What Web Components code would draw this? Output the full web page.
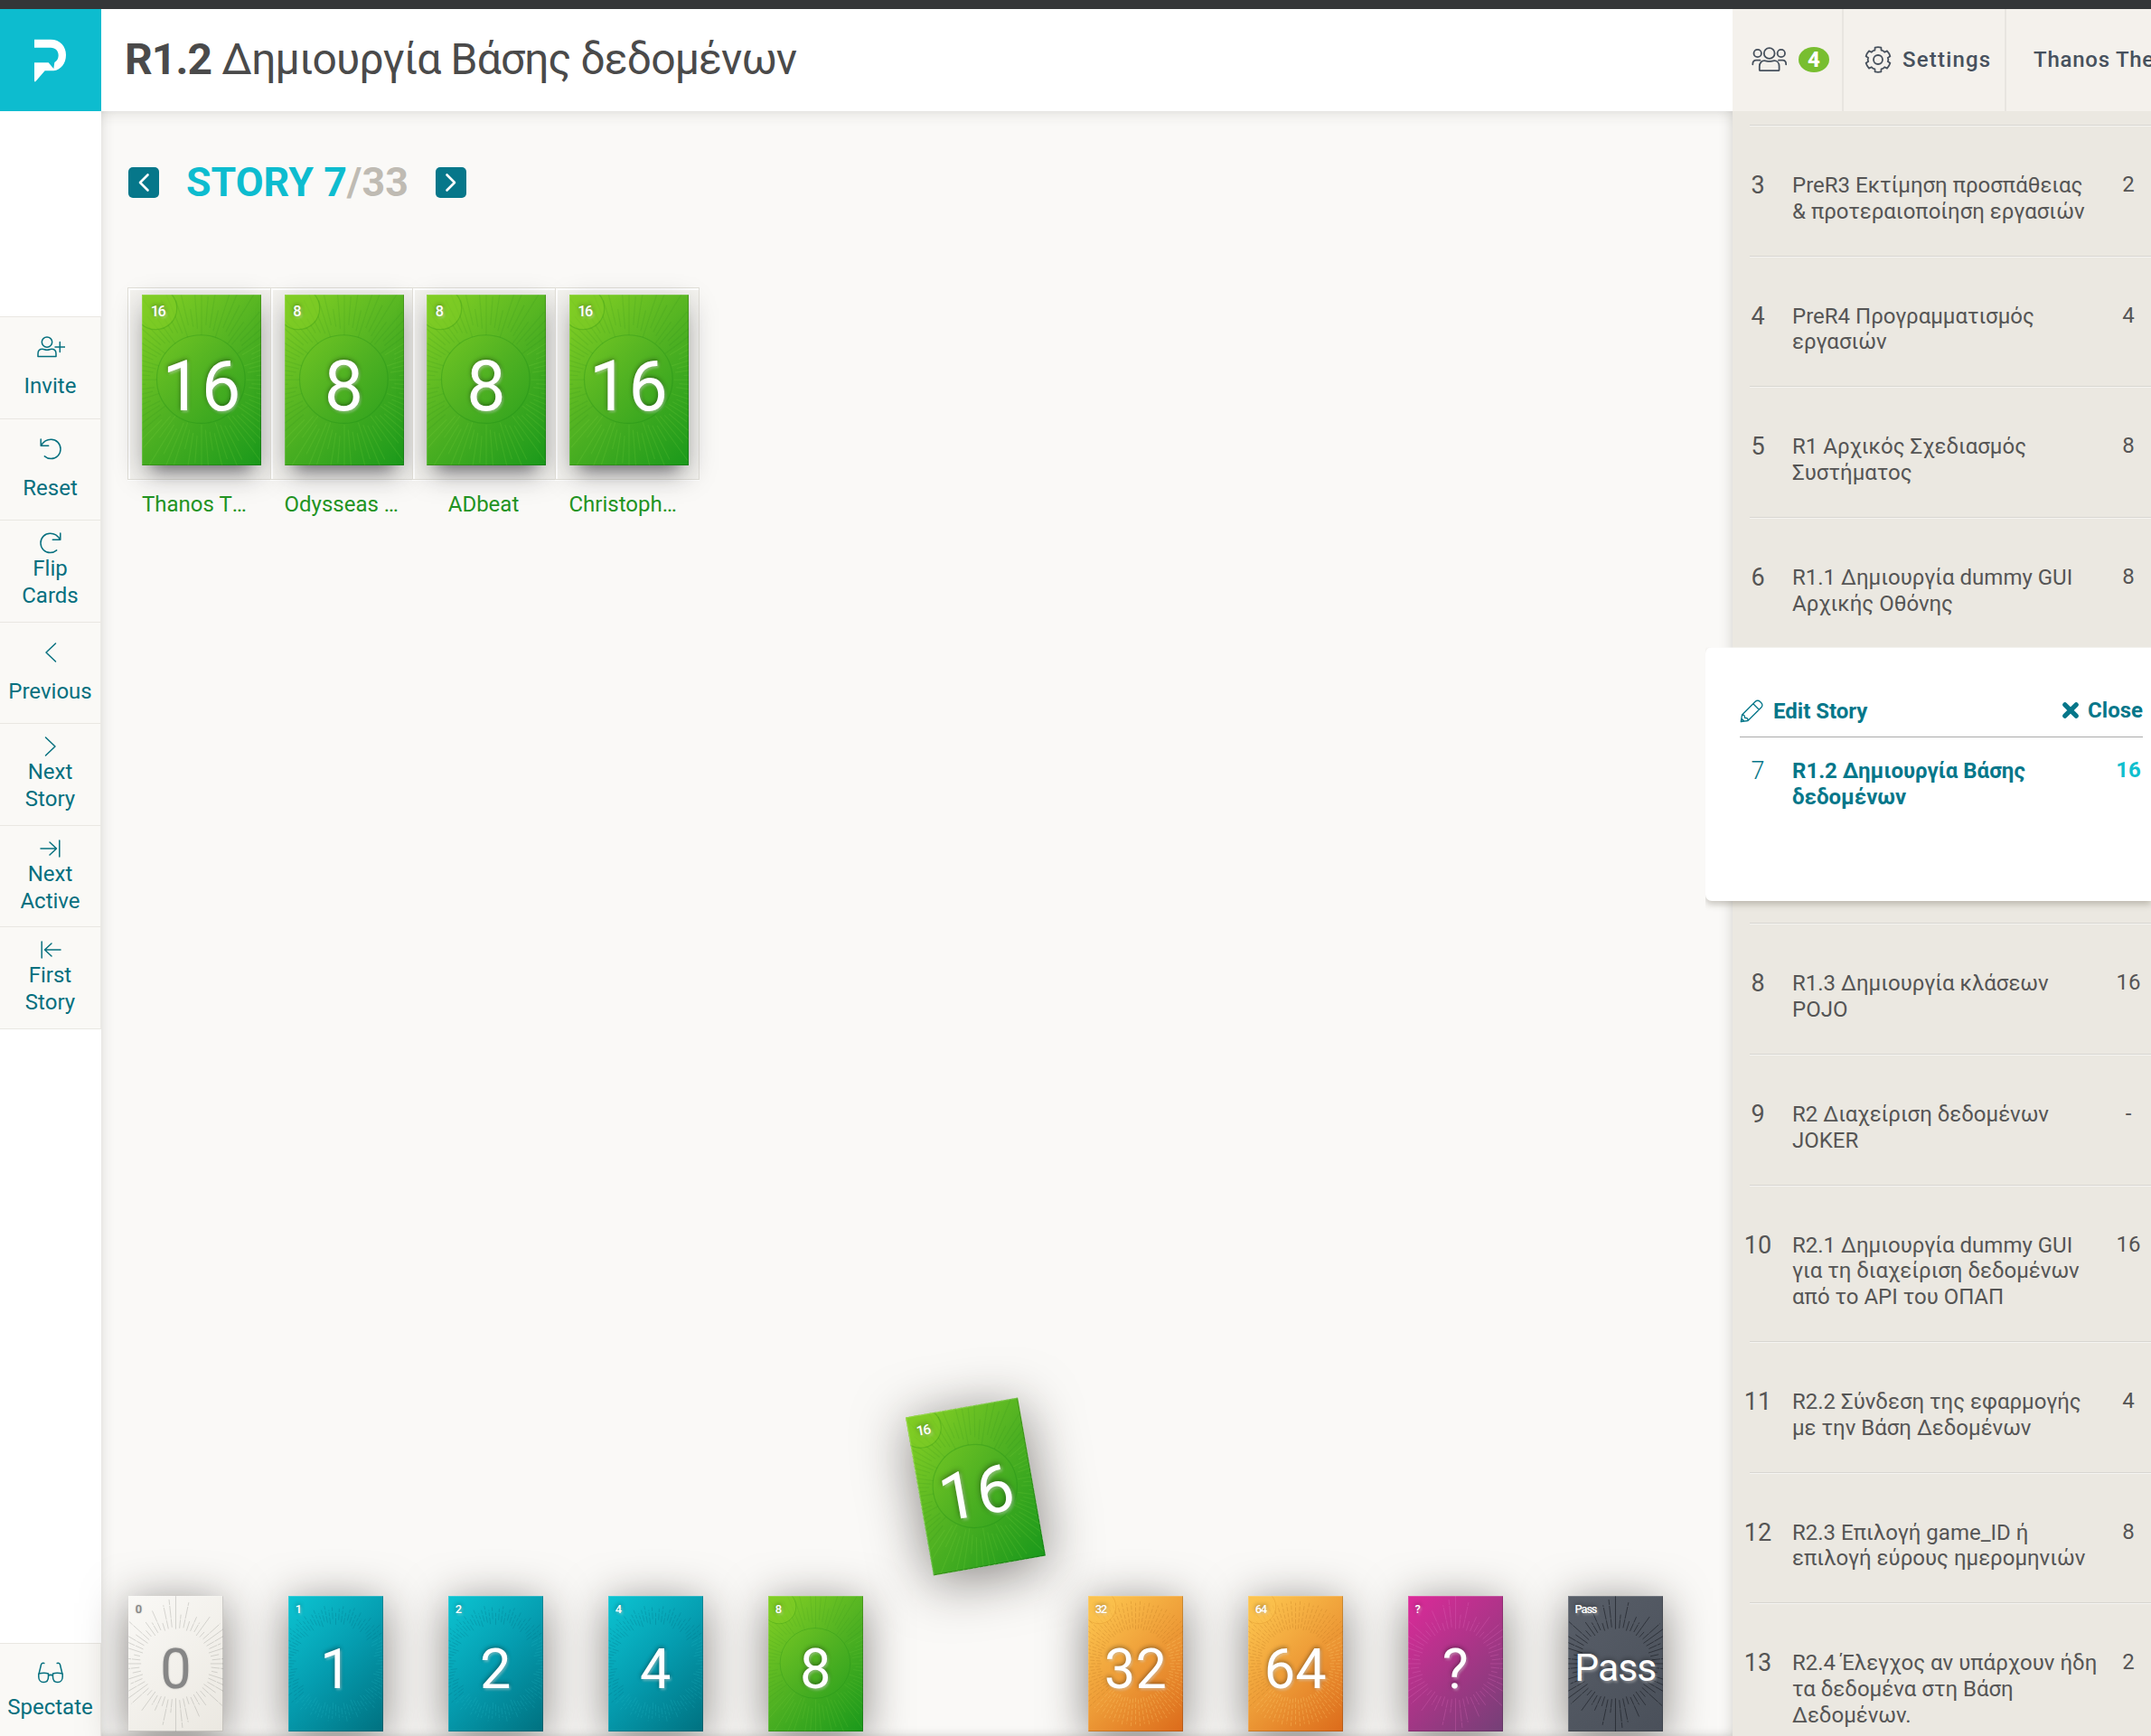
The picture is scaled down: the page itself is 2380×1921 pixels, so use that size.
<!DOCTYPE html>
<html lang="el">
<head>
<meta charset="utf-8">
<title>Planning poker</title>
<style>
html,body{margin:0;height:100%;overflow:hidden;background:#faf9f7}
body{font-family:Roboto,"Noto Sans",sans-serif;color:#4a4a4a}
</style>
</head>
<body>
<pp-app></pp-app>
<script>
const define = (name, html, setup) => customElements.define(name, class extends HTMLElement {
  connectedCallback() {
    if (this.shadowRoot) return;
    const t = document.createElement('template');
    t.innerHTML = typeof html === 'function' ? html(this) : html;
    this.attachShadow({mode: 'open'}).append(t.content.cloneNode(true));
    if (setup) setup(this);
  }
});

/* Outline of a six-toothed gear centred on (15,15) */
function gearPath() {
  const p = (deg, r) => {
    const a = deg * Math.PI / 180;
    return (15 + Math.cos(a) * r).toFixed(2) + ' ' + (15 + Math.sin(a) * r).toFixed(2);
  };
  let d = '';
  for (let k = 0; k < 6; k++) {
    const c = -90 + 60 * k;
    d += `${k ? 'L' : 'M'}${p(c - 19, 11)}L${p(c - 14, 13.9)}A14 14 0 0 1 ${p(c + 14, 13.9)}L${p(c + 19, 11)}Q${p(c + 30, 11.8)} ${p(c + 41, 11)}`;
  }
  return d + 'Z';
}

/* Line icons, each drawn at its natural pixel size */
const ICONS = {
  invite: [32, 24, '<ellipse cx="12" cy="6.6" rx="5.7" ry="5.6"/><path d="M2 22.4V19.500c0-3.600 2.400-5.200 5-5.200 1.600 0 2.800.9 5 .9s3.400-.9 5-.9c2.600 0 5 1.600 5 5.200v2.900zM26.300 6.500v11M21 12h10.600"/>'],
  reset: [26, 24, '<path d="M2.200 1v7.300h8.500M2.600 8.100C5 3.800 9 1.300 13.500 1.300c6 0 10.500 4.700 10.500 10.600s-4.600 10.700-10.500 10.700c-2.700 0-5.200-1-7.200-2.700"/>'],
  flip: [26, 24, '<path d="M23.800 1v7.300h-8.500M23.400 8.100C21 3.800 17 1.300 12.500 1.300 6.500 1.300 2 6 2 11.900s4.600 10.700 10.500 10.700c2.700 0 5.200-1 7.200-2.700"/>'],
  prev: [16, 24, '<path d="M13.500 2 3 12l10.500 10"/>'],
  next: [16, 24, '<path d="M2.500 2 13 12 2.500 22"/>'],
  last: [26, 24, '<path d="M2 12h17.500M12 5l7.500 7-7.500 7M22.800 3v18"/>'],
  first: [26, 24, '<path d="M24 12H6.500M14 5 6.500 12l7.500 7M3.200 3v18"/>'],
  glasses: [30, 24, '<path d="M7.800 1.500C5.500.8 4.600 2 4.300 4L2 13.500M22.200 1.500c2.300-.7 3.200.5 3.500 2.500L28 13.500M1.800 13c4-1 8-1 10.700 0v3.500c0 3.500-2 6-5.300 6s-5.400-2.500-5.400-6zM28.200 13c-4-1-8-1-10.700 0v3.500c0 3.500 2 6 5.300 6s5.400-2.500 5.400-6zM12.500 15.200c1.500-1 3.500-1 5 0"/>'],
  users: [40, 28, '<circle cx="19.700" cy="7" r="5.900"/><circle cx="6.700" cy="7" r="4.200"/><circle cx="32.800" cy="7" r="4.200"/><path d="M9.800 26.200c-.6 0-1-.4-1-1V21.500c0-4 2.400-6.300 5.400-6.300 2 0 3 .7 5.500.7s3.500-.7 5.500-.7c3 0 5.400 2.300 5.400 6.300v3.700c0 .6-.4 1-1 1zM1.300 19.300c0-3 1.500-4.600 3.800-4.600h4.400M38.200 19.300c0-3-1.500-4.600-3.800-4.600h-4.400"/>'],
  gear: [30, 30, `<path d="${gearPath()}"/><circle cx="15" cy="15" r="5"/>`],
  pencil: [26, 26, '<path d="M1.300 24.700 2.500 17 17 2.500c1.800-1.800 4-1.600 5.500-.1l1.300 1.300c1.500 1.500 1.500 3.700-.2 5.400L9 23.500zM2.500 17c2-.2 3 .6 3 3.200 2.700 0 3.700 1.200 3.500 3.300M14.800 4.800l6.500 6.500M1.500 24.500l3.300-.6-2.700-2.700z"/>'],
  cross: [20, 20, '<path d="M3.800 3.800l12.400 12.400M16.200 3.800 3.800 16.200"/>'],
  cl: [34, 34, '<path d="M21.500 8.500 13 17l8.500 8.500"/>'],
  cr: [34, 34, '<path d="M12.500 8.500 21 17l-8.500 8.500"/>']
};
define('pp-icon', el => {
  const [w, h, d] = ICONS[el.getAttribute('name')];
  return `<style>:host{display:block;width:${w}px;height:${h}px;flex:none}svg{display:block;fill:none;stroke:currentColor;stroke-width:var(--sw,1.5);stroke-linecap:round;stroke-linejoin:round}</style>
  <svg width="${w}" height="${h}" viewBox="0 0 ${w} ${h}">${d}</svg>`;
});

define('pp-logo', `<style>:host{display:flex;width:112px;height:113px;background:#0dbccf;align-items:center;justify-content:center}svg{display:block;margin:-2px 0 0 8px}</style>
<svg width="80" height="80" viewBox="0 0 240 240" fill="#fff"><path d="M54 53H108C140 53 159 76 159 104C159 133 142 153 118 157H89L58 193H54V130H101L118 150L121 129C130 124 134 116 134 106C134 91 125 80 108 80H54Z"/></svg>`);

/* Playing card: geometry in em, where 1em is a hundredth of the card width */
const THEMES = {
  green: ['linear-gradient(135deg,#86d124 0%,#4fb122 50%,#1a991b 100%)', '#fff', 'long'],
  teal: ['linear-gradient(135deg,#0cc4d2 0%,#059db0 48%,#007180 100%)', '#fff', 'dense'],
  orange: ['linear-gradient(135deg,#ffcb52 0%,#ee9d38 50%,#dc6b1b 100%)', '#fff', 'dash'],
  pink: ['linear-gradient(135deg,#dc2a99 0%,#a93587 50%,#744077 100%)', '#fff', 'burst'],
  light: ['linear-gradient(135deg,#faf9f6,#ebe8e1)', '#868686', 'burst'],
  dark: ['linear-gradient(135deg,#585e68,#4a505a)', '#fff', 'burst']
};
function rays(kind, theme) {
  const cx = 50, cy = 71.4, out = [];
  const line = (a, r1, r2, extra) => {
    const c = Math.cos(a), s = Math.sin(a), f = n => n.toFixed(1);
    out.push(`<path d="M${f(cx + c * r1)} ${f(cy + s * r1)}L${f(cx + c * r2)} ${f(cy + s * r2)}" ${extra || ''}/>`);
  };
  const tone = s => s > 0.1 ? 'stroke="var(--lo)"' : 'stroke="var(--hi)"';
  if (kind === 'burst') {
    for (let i = 0; i < 60; i++) {
      const a = i * Math.PI / 30 - Math.PI / 2, r2 = [84, 52, 66, 47, 54, 50, 61, 45, 63, 68][i % 10];
      line(a, 36.5 + (i % 3), r2, i % 3 ? 'stroke-dasharray="9 .8 13 1"' : '');
    }
  } else if (kind === 'long') {
    for (let i = 0; i < 80; i++) {
      const a = i * Math.PI / 40 - Math.PI / 2;
      line(a, i % 4 ? 39 + (i * 7 % 9) : 37.500, [92, 70, 84, 60, 75][i % 5], tone(Math.cos(a - .9)));
    }
  } else if (kind === 'dense') {
    for (let i = 0; i < 96; i++) {
      const a = i * Math.PI / 48 - Math.PI / 2;
      line(a, 41 + (i * 5 % 7), 55 + (i * 11 % 8), tone(Math.cos(a - .9)) + ' stroke-dasharray="7 1.500 4 1.500"');
    }
  } else {
    for (let i = 0; i < 84; i++) {
      const a = i * Math.PI / 42 - Math.PI / 2;
      line(a, 36 + (i % 3), 64 + (i % 2) * 2, tone(Math.cos(a - .9)) + ' stroke-dasharray="4.500 1.800"');
    }
  }
  if (theme === 'green') out.push(`<circle cx="${cx - .5}" cy="${cy - .5}" r="37" stroke="rgba(20,130,20,.26)"/>`);
  if (theme === 'green' || theme === 'orange') out.push(`<circle cx="11.500" cy="11.500" r="17.800" fill="${theme === 'green' ? '#7ecb25' : '#fabf4d'}" fill-opacity=".6" stroke="${theme === 'green' ? 'rgba(50,150,20,.34)' : 'rgba(210,130,30,.28)'}"/>`);
  return out.join('');
}
define('pp-card', el => {
  const theme = el.getAttribute('theme'), [bg, fg, kind] = THEMES[theme], v = el.getAttribute('value');
  const tones = {green: ['rgba(20,120,30,.1)', 'rgba(150,225,80,.14)'], teal: ['rgba(0,90,110,.24)', 'rgba(50,200,210,.2)'],
    orange: ['rgba(170,100,20,.25)', 'rgba(255,205,110,.36)'], pink: ['rgba(225,110,190,.3)', 'rgba(225,110,190,.3)'],
    light: ['rgba(150,150,145,.38)', 'rgba(150,150,145,.38)'], dark: ['rgba(25,28,34,.65)', 'rgba(25,28,34,.65)']}[theme];
  const long = v.length > 3;
  return `<style>
  :host{display:grid;font-size:var(--u,1.05px);width:100em;height:142.86em;background:${bg};color:${fg};--hi:${tones[0]};--lo:${tones[1]};
    box-shadow:var(--card-shadow);flex:none;overflow:hidden}
  svg,.face,.edge{grid-area:1/1;width:100em;height:142.86em}
  svg{fill:none;stroke:var(--hi);stroke-width:.9}
  .edge{box-shadow:inset 1px 1px 0 rgba(255,255,255,.16),inset -1px -1px 0 rgba(0,0,0,.16)}
  .face{display:flex;flex-direction:column;text-shadow:${theme === 'light' ? '0 0 2px rgba(0,0,0,.25)' : '1.5px 2px 3px rgba(255,255,255,.36),0 -1px 5px rgba(0,0,0,.45)'}}
  .s{font-size:12.3em;line-height:1.2;font-weight:500;letter-spacing:-.09em;padding:.58em 0 0 .6em;height:1.84em;box-sizing:border-box}
  .b{font-size:${long ? 40.5 : 58.3}em;line-height:1;text-align:center;letter-spacing:${long ? '-.02em' : '.005em'};margin-top:${long ? '.83em' : '.45em'};white-space:nowrap}
  </style><svg viewBox="0 0 100 142.86" aria-hidden="true">${rays(kind, theme)}</svg>
  <div class="face"><span class="s">${v}</span><span class="b">${v}</span></div><div class="edge"></div>`;
});

define('pp-action', `<style>
:host{display:flex;flex-direction:column;align-items:center;box-sizing:border-box;height:112.5px;width:112px;padding:21px 0 0;gap:16px;border-top:1px solid #e9e7e2;border-right:1px solid #eceae6;background:#faf9f6;color:#06707f;font-size:24px;line-height:30px;text-align:center}
:host([two]){padding-top:13px;gap:1px}
:host([end]){height:103px;padding-top:20px;gap:11px}
</style><slot name="i"></slot><span><slot></slot></span>`);

define('pp-sidebar', `<style>
:host{display:flex;flex-direction:column;width:112px;background:#fff;flex:none;box-sizing:border-box;padding-top:227px}
.last{box-sizing:border-box;height:1px;background:#e9e7e2}.sp{flex:1}
</style>
<pp-action><pp-icon slot="i" name="invite"></pp-icon>Invite</pp-action>
<pp-action><pp-icon slot="i" name="reset"></pp-icon>Reset</pp-action>
<pp-action two><pp-icon slot="i" name="flip"></pp-icon>Flip<br>Cards</pp-action>
<pp-action><pp-icon slot="i" name="prev"></pp-icon>Previous</pp-action>
<pp-action two><pp-icon slot="i" name="next"></pp-icon>Next<br>Story</pp-action>
<pp-action two><pp-icon slot="i" name="last"></pp-icon>Next<br>Active</pp-action>
<pp-action two><pp-icon slot="i" name="first"></pp-icon>First<br>Story</pp-action>
<div class="last"></div><div class="sp"></div>
<pp-action end><pp-icon slot="i" name="glasses"></pp-icon>Spectate</pp-action>`);

define('pp-header', `<style>
:host{display:flex;height:113px;background:#fff;border-top:10px solid #343638;flex:none}
h1{margin:0;flex:1;padding-left:26px;font-size:48px;font-weight:400;line-height:111px;white-space:nowrap;color:#4a4a4a;letter-spacing:-.88px}
.r{display:flex;width:463px;background:#f4f1ec;overflow:hidden;color:#47515d;font-size:24px;font-weight:500;letter-spacing:.75px}
.c{display:flex;align-items:center;box-sizing:border-box;flex:none;white-space:nowrap;border-right:2px solid #e8e5e0;line-height:28px;padding-bottom:1px}
.c1{width:123px;padding-left:21px;gap:12px;--sw:1.8}.c2{width:180px;padding-left:23px;gap:12px;letter-spacing:1.2px;--sw:1.8}.c3{padding-left:30px;border:0}
.n{width:34px;height:28px;border-radius:50%;background:#78be30;color:#fff;font-weight:800;text-align:center;line-height:28px;letter-spacing:0}
</style><pp-logo></pp-logo><h1><b>R1.2</b> Δημιουργία Βάσης δεδομένων</h1>
<div class="r"><div class="c c1"><pp-icon name="users"></pp-icon><span class="n">4</span></div>
<div class="c c2"><pp-icon name="gear"></pp-icon><span>Settings</span></div><div class="c c3">Thanos The</div></div>`);

define('pp-player', el => `<style>
:host{display:block;width:157.5px;flex:none;--u:1.32px;--card-shadow:0 16px 18px -12px rgba(20,20,30,.5),0 10px 30px rgba(20,20,30,.27)}
.f{box-sizing:border-box;height:213px;padding:7px 0 0 15px;background:#f4f3ef;border:1px solid #e1dfd8;border-right:0;box-shadow:inset 1px 1px 0 1px #fff,0 1px 0 #fff}
:host([end]){width:160px}
:host([end]) .f{border-right:1px solid #e1dfd8}
.n{margin:11px 0 0 16px;width:126px;font-size:24px;line-height:32px;color:#229322;white-space:nowrap}
:host([mid]) .n{text-align:center}
</style><div class="f"><pp-card theme="green" value="${el.getAttribute('value')}"></pp-card></div><div class="n"><slot></slot></div>`);

define('pp-table', `<style>
:host{display:flex;flex-direction:column;flex:1;box-sizing:border-box;padding:62px 0 5px 29px;background:#faf9f7;min-width:0;
 box-shadow:inset 0 14px 16px -12px rgba(60,60,50,.14),inset 12px 0 14px -10px rgba(60,60,50,.12),inset -12px 0 14px -10px rgba(60,60,50,.16),inset 0 -8px 10px -6px rgba(60,60,50,.14)}
.s{display:flex;align-items:center;height:34px;padding-left:1px}
.s pp-icon{background:#06778a;color:#fff;border-radius:5px;--sw:2.6}
.s b{font-size:44.8px;line-height:36px;color:#0dbccf;margin:0 30px 0 30px;white-space:nowrap}.s i{font-style:normal;color:#bfbbb3}
.p{display:flex;margin-top:99px}.g{flex:1}
.w{display:inline-block}
.h{display:flex;gap:72px;padding-left:1px;--card-shadow:0 8px 50px rgba(30,25,20,.53)}
.up{transform:translateY(-196px) rotate(-10deg) scale(1.2,1.185)}
</style>
<div class="s"><pp-icon name="cl"></pp-icon><b>STORY 7<i>/33</i></b><pp-icon name="cr"></pp-icon></div>
<div class="p"><pp-player value="16">Thanos T<span class="w">…</span></pp-player><pp-player value="8">Odysseas …</pp-player><pp-player value="8" mid>ADbeat</pp-player><pp-player value="16" end>Christoph…</pp-player></div>
<div class="g"></div>
<div class="h"><pp-card theme="light" value="0"></pp-card><pp-card theme="teal" value="1"></pp-card><pp-card theme="teal" value="2"></pp-card><pp-card theme="teal" value="4"></pp-card><pp-card theme="green" value="8"></pp-card><pp-card class="up" theme="green" value="16"></pp-card><pp-card theme="orange" value="32"></pp-card><pp-card theme="orange" value="64"></pp-card><pp-card theme="pink" value="?"></pp-card><pp-card theme="dark" value="Pass"></pp-card></div>`);

define('pp-story', el => `<style>
:host{display:block;color:#555}
.r{display:flex;box-sizing:border-box;min-height:144.6px;margin-left:19px;padding:52px 0 34px;border-top:1px solid #d8d6d1;box-shadow:inset 0 1px 0 #f5f4f1;white-space:nowrap;font-size:24px;line-height:28.800px}
.n{width:48px;margin-left:-15px;text-align:center;font-size:27px}
.t{flex:1;margin-left:14px}
.v{width:50px;text-align:center;margin-top:-1px}
:host([open]){color:#06778a}
:host([open]) .r{margin:0 0 0 49px;border:0;box-shadow:none;padding:23px 0 0;min-height:0}
:host([open]) .n{font-weight:300}:host([open]) .t{font-weight:700}:host([open]) .v{font-weight:700;color:#10bfce}
</style><div class="r"><span class="n">${el.getAttribute('n')}</span><span class="t"><slot></slot></span><span class="v">${el.getAttribute('v')}</span></div>`);

define('pp-open', `<style>
:host{display:block;box-sizing:border-box;height:281px;margin:0 0 24px -30px;background:#fff;border-radius:7px 0 0 7px;box-shadow:0 4px 7px rgba(60,50,30,.25);color:#06778a;font-size:24px;font-weight:700;clip-path:inset(0 -20px -20px 0)}
.a{display:flex;align-items:center;justify-content:space-between;box-sizing:border-box;height:100px;margin:0 9px 0 38px;padding-top:43px;border-bottom:1px solid #aaa}
.a span{display:flex;align-items:center;gap:11px;--sw:1.35}.a .c{--sw:5.2;gap:9px;padding-bottom:2px}
</style><div class="a"><span><pp-icon name="pencil"></pp-icon>Edit Story</span><span class="c"><pp-icon name="cross"></pp-icon>Close</span></div>
<slot></slot>`);

define('pp-backlog', `<style>:host{display:block;width:463px;flex:none;background:#ebe8e1;box-sizing:border-box;padding-top:15px;height:1798px}</style>
<pp-story n="3" v="2">PreR3 Εκτίμηση προσπάθειας<br>&amp; προτεραιοποίηση εργασιών</pp-story>
<pp-story n="4" v="4">PreR4 Προγραμματισμός<br>εργασιών</pp-story>
<pp-story n="5" v="8">R1 Αρχικός Σχεδιασμός<br>Συστήματος</pp-story>
<pp-story n="6" v="8">R1.1 Δημιουργία dummy GUI<br>Αρχικής Οθόνης</pp-story>
<pp-open><pp-story open n="7" v="16">R1.2 Δημιουργία Βάσης<br>δεδομένων</pp-story></pp-open>
<pp-story n="8" v="16">R1.3 Δημιουργία κλάσεων<br>POJO</pp-story>
<pp-story n="9" v="-">R2 Διαχείριση δεδομένων<br>JOKER</pp-story>
<pp-story n="10" v="16">R2.1 Δημιουργία dummy GUI<br>για τη διαχείριση δεδομένων<br>από το API του ΟΠΑΠ</pp-story>
<pp-story n="11" v="4">R2.2 Σύνδεση της εφαρμογής<br>με την Βάση Δεδομένων</pp-story>
<pp-story n="12" v="8">R2.3 Επιλογή game_ID ή<br>επιλογή εύρους ημερομηνιών</pp-story>
<pp-story n="13" v="2">R2.4 Έλεγχος αν υπάρχουν ήδη<br>τα δεδομένα στη Βάση<br>Δεδομένων.</pp-story>`);

define('pp-app', `<style>:host{display:flex;flex-direction:column;width:2380px;height:1921px;overflow:hidden}.b{display:flex;flex:1;min-height:0}</style>
<pp-header></pp-header><div class="b"><pp-sidebar></pp-sidebar><pp-table></pp-table><pp-backlog></pp-backlog></div>`);
</script>
</body>
</html>
